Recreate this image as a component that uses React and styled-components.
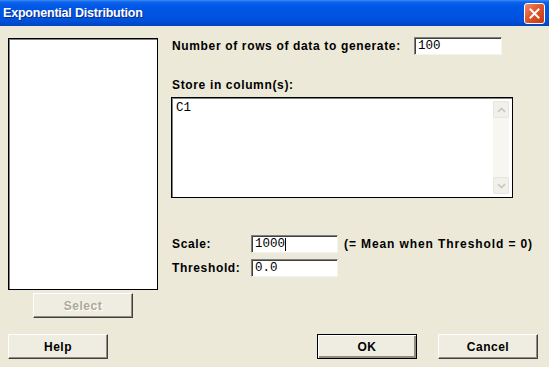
import React from 'react';
import styled, { createGlobalStyle, css } from 'styled-components';

const GlobalStyle = createGlobalStyle`
    html, body {
        margin: 0;
        padding: 0;
        background: #ece9d8;
        overflow: hidden;
    }
`;

const Window = styled.div`
    width: 549px;
    height: 367px;
    display: flex;
    flex-direction: column;
    background: #ece9d8;
    font-family: "Liberation Sans", Arial, sans-serif;
    font-size: 12px;
    color: #000;
`;

const TitleBar = styled.div`
    height: 26px;
    flex: none;
    display: flex;
    align-items: center;
    justify-content: space-between;
    padding: 0 3px 0 3px;
    box-sizing: border-box;
    background: linear-gradient(
        #3a8cf8 0px,
        #0f63ea 2px,
        #0058e6 6px,
        #0054e2 14px,
        #004fd8 22px,
        #0043bb 26px
    );
`;

const Title = styled.span`
    color: #fff;
    font-weight: bold;
    font-size: 12.5px;
    letter-spacing: -0.2px;
    text-shadow: 1px 1px 0 #0a2b8a;
`;

const CloseButton = styled.div`
    width: 19px;
    height: 19px;
    margin-right: 1px;
    margin-top: 1px;
    border: 1px solid #fff;
    border-radius: 3px;
    background: linear-gradient(135deg, #f08c6a 0%, #e0562c 45%, #c23a14 100%);
    display: flex;
    align-items: center;
    justify-content: center;
`;

const Body = styled.div`
    flex: 1;
    display: flex;
    flex-direction: column;
`;

const Content = styled.div`
    display: flex;
    padding-left: 8px;
`;

const LeftColumn = styled.div`
    width: 150px;
    padding-top: 12px;
    display: flex;
    flex-direction: column;
    align-items: center;
`;

const sunkenBox = css`
    box-sizing: border-box;
    background: #fff;
    border: 1px solid #000;
    box-shadow: inset 1px 1px 0 #808080;
`;

const ListBox = styled.div`
    ${sunkenBox};
    width: 150px;
    height: 252px;
`;

const Button = styled.div`
    box-sizing: border-box;
    width: 100px;
    height: 25px;
    display: flex;
    align-items: center;
    justify-content: center;
    font-weight: bold;
    font-size: 12px;
    letter-spacing: 0.5px;
    background: #efede2;
    border-top: 1px solid #fff;
    border-left: 1px solid #fff;
    border-right: 1px solid #404040;
    border-bottom: 1px solid #404040;
    box-shadow: inset -1px -1px 0 #918e80;
    color: ${(p) => (p.$disabled ? '#aca899' : '#000')};
    text-shadow: ${(p) => (p.$disabled ? '1px 1px 0 #fff' : 'none')};
    ${(p) =>
        p.$default &&
        css`
            border: 1px solid #000;
            box-shadow: inset 1px 1px 0 #fff, inset -2px -2px 0 #918e80;
        `}
`;

const SelectButton = styled(Button)`
    margin-top: 3px;
`;

const RightColumn = styled.div`
    margin-left: 13px;
    padding-top: 11px;
    display: flex;
    flex-direction: column;
`;

const FieldRow = styled.div`
    display: flex;
    align-items: center;
    margin-top: ${(p) => p.$top || 0}px;
`;

const Label = styled.label`
    font-weight: bold;
    font-size: 12px;
    letter-spacing: 0.65px;
    line-height: 14px;
    width: ${(p) => (p.$w ? `${p.$w}px` : 'auto')};
    padding-left: 1px;
    box-sizing: border-box;
    white-space: nowrap;
`;

const Input = styled.div`
    box-sizing: border-box;
    width: ${(p) => p.$w}px;
    height: 18px;
    background: #fff;
    border-top: 1px solid #808080;
    border-left: 1px solid #808080;
    border-right: 1px solid #f4f3ee;
    border-bottom: 1px solid #f4f3ee;
    box-shadow: inset 1px 1px 0 #404040;
    font-family: "Liberation Mono", "Courier New", monospace;
    font-size: 12.5px;
    line-height: 16px;
    padding-left: 3px;
    display: flex;
    align-items: center;
`;

const Caret = styled.span`
    display: inline-block;
    width: 1px;
    height: 13px;
    background: #000;
`;

const Note = styled.span`
    font-weight: bold;
    font-size: 12px;
    letter-spacing: 0.9px;
    margin-left: 6px;
    white-space: nowrap;
`;

const TextArea = styled.div`
    ${sunkenBox};
    width: 342px;
    height: 101px;
    margin-top: 5px;
    display: flex;
    padding: 3px 3px 3px 4px;
`;

const TextContent = styled.div`
    flex: 1;
    font-family: "Liberation Mono", "Courier New", monospace;
    font-size: 12.5px;
    line-height: 14px;
`;

const ScrollBar = styled.div`
    width: 16px;
    display: flex;
    flex-direction: column;
    justify-content: space-between;
    background: #f7f6f0;
`;

const ScrollArrow = styled.div`
    box-sizing: border-box;
    height: 17px;
    border: 1px solid #e8e6dc;
    border-radius: 2px;
    background: #f1f0ea;
    display: flex;
    align-items: center;
    justify-content: center;
`;

const ButtonRow = styled.div`
    display: flex;
    align-items: center;
    padding: 0 11px 0 8px;
    margin-top: 16px;
`;

const Spacer = styled.div`
    flex: 1;
`;

const Gap = styled.div`
    width: 21px;
`;

const Chevron = ({ up }) => (
    <svg width="9" height="6" viewBox="0 0 9 6">
        <path
            d={up ? 'M1 5 L4.5 1.5 L8 5' : 'M1 1 L4.5 4.5 L8 1'}
            fill="none"
            stroke="#c9c7ba"
            strokeWidth="1.6"
        />
    </svg>
);

const App = () => {
    return (
        <Window>
            <GlobalStyle />
            <TitleBar>
                <Title>Exponential Distribution</Title>
                <CloseButton>
                    <svg width="13" height="13" viewBox="0 0 13 13">
                        <path d="M2.5 2.5 L10.5 10.5 M10.5 2.5 L2.5 10.5" stroke="#fff" strokeWidth="2" strokeLinecap="square" />
                    </svg>
                </CloseButton>
            </TitleBar>
            <Body>
                <Content>
                    <LeftColumn>
                        <ListBox />
                        <SelectButton $disabled>Select</SelectButton>
                    </LeftColumn>
                    <RightColumn>
                        <FieldRow>
                            <Label $w={243}>Number of rows of data to generate:</Label>
                            <Input $w={88}>100</Input>
                        </FieldRow>
                        <FieldRow $top={23}>
                            <Label>Store in column(s):</Label>
                        </FieldRow>
                        <TextArea>
                            <TextContent>C1</TextContent>
                            <ScrollBar>
                                <ScrollArrow>
                                    <Chevron up />
                                </ScrollArrow>
                                <ScrollArrow>
                                    <Chevron />
                                </ScrollArrow>
                            </ScrollBar>
                        </TextArea>
                        <FieldRow $top={37}>
                            <Label $w={80}>Scale:</Label>
                            <Input $w={87}>
                                1000
                                <Caret />
                            </Input>
                            <Note>(= Mean when Threshold = 0)</Note>
                        </FieldRow>
                        <FieldRow $top={6}>
                            <Label $w={80}>Threshold:</Label>
                            <Input $w={87}>0.0</Input>
                        </FieldRow>
                    </RightColumn>
                </Content>
                <ButtonRow>
                    <Button>Help</Button>
                    <Spacer />
                    <Button $default>OK</Button>
                    <Gap />
                    <Button>Cancel</Button>
                </ButtonRow>
            </Body>
        </Window>
    );
};

export default App;
